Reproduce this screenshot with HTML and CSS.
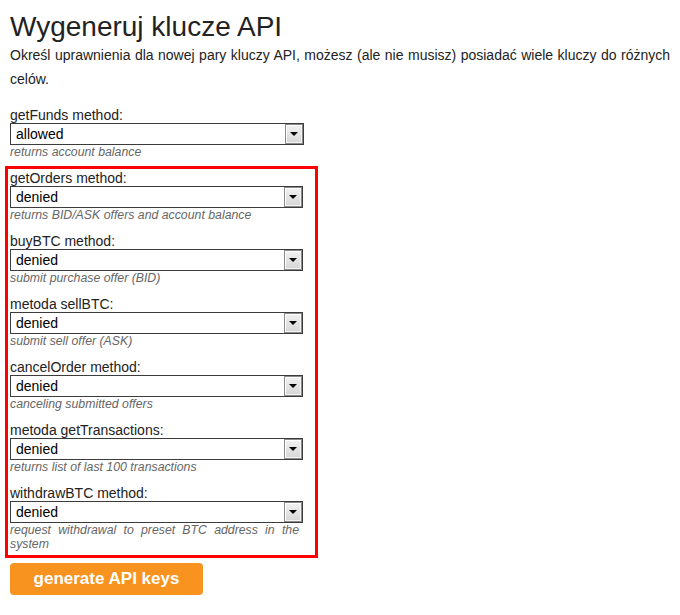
FILE: index.html
```html
<!DOCTYPE html>
<html lang="pl">
<head>
<meta charset="utf-8">
<title>Wygeneruj klucze API</title>
<link rel="stylesheet" href="styles.css">
</head>
<body>
<h1 class="title">Wygeneruj klucze API</h1>
<p class="intro">Określ uprawnienia dla nowej pary kluczy API, możesz (ale nie musisz) posiadać wiele kluczy do różnych celów.</p>
<form class="form">
  <div class="field field-first">
    <label class="label">getFunds method:</label>
    <div class="select"><select class="select-input"><option>allowed</option><option>denied</option></select><span class="arrow"></span></div>
    <div class="desc">returns account balance</div>
  </div>
  <div class="highlight">
    <div class="field">
      <label class="label">getOrders method:</label>
      <div class="select"><select class="select-input"><option>denied</option><option>allowed</option></select><span class="arrow"></span></div>
      <div class="desc">returns BID/ASK offers and account balance</div>
    </div>
    <div class="field">
      <label class="label">buyBTC method:</label>
      <div class="select"><select class="select-input"><option>denied</option><option>allowed</option></select><span class="arrow"></span></div>
      <div class="desc">submit purchase offer (BID)</div>
    </div>
    <div class="field">
      <label class="label">metoda sellBTC:</label>
      <div class="select"><select class="select-input"><option>denied</option><option>allowed</option></select><span class="arrow"></span></div>
      <div class="desc">submit sell offer (ASK)</div>
    </div>
    <div class="field">
      <label class="label">cancelOrder method:</label>
      <div class="select"><select class="select-input"><option>denied</option><option>allowed</option></select><span class="arrow"></span></div>
      <div class="desc">canceling submitted offers</div>
    </div>
    <div class="field">
      <label class="label">metoda getTransactions:</label>
      <div class="select"><select class="select-input"><option>denied</option><option>allowed</option></select><span class="arrow"></span></div>
      <div class="desc">returns list of last 100 transactions</div>
    </div>
    <div class="field field-last">
      <label class="label">withdrawBTC method:</label>
      <div class="select"><select class="select-input"><option>denied</option><option>allowed</option></select><span class="arrow"></span></div>
      <div class="desc">request withdrawal to preset BTC address in the system</div>
    </div>
  </div>
  <button type="button" class="btn">generate API keys</button>
</form>
</body>
</html>
```
FILE: styles.css
```css
html, body {
  margin: 0;
  background: #ffffff;
}
body {
  padding: 11px 10px 10px 10px;
  font-family: "Liberation Sans", Arial, sans-serif;
  color: #222222;
}
.title {
  margin: 0;
  font-size: 28px;
  line-height: 32px;
  font-weight: normal;
  color: #222222;
}
.intro {
  margin: 0 0 16px 0;
  font-size: 14px;
  line-height: 24px;
  text-align: justify;
  color: #222222;
}
.form {
  width: 294px;
}
.field {
  margin-bottom: 11px;
}
.field-first {
  margin-bottom: 7px;
}
.field-last {
  margin-bottom: 0;
}
.label {
  display: block;
  font-size: 14px;
  line-height: 16px;
  color: #222222;
}
.select {
  position: relative;
  height: 22px;
}
.select-input {
  appearance: none;
  -webkit-appearance: none;
  display: block;
  box-sizing: border-box;
  width: 100%;
  height: 22px;
  margin: 0;
  padding: 0 22px 0 5px;
  border: 1px solid #3c3c3c;
  border-radius: 0;
  background: #ffffff;
  font-family: "Liberation Sans", Arial, sans-serif;
  font-size: 14px;
  color: #000000;
  outline: none;
}
.arrow {
  position: absolute;
  top: 1px;
  right: 1px;
  width: 18px;
  height: 20px;
  box-sizing: border-box;
  border: 1px solid #8a8a8a;
  box-shadow: inset 1px 1px 0 #ffffff, inset -1px -1px 0 #f4f4f4;
  background: linear-gradient(#f2f2f2, #d6d6d6);
  pointer-events: none;
}
.arrow::after {
  content: "";
  position: absolute;
  left: 4px;
  top: 7px;
  width: 0;
  height: 0;
  border-left: 4px solid transparent;
  border-right: 4px solid transparent;
  border-top: 4px solid #000000;
}
.desc {
  padding-right: 4px;
  font-size: 12.3px;
  line-height: 14px;
  font-style: italic;
  color: #666666;
  text-align: justify;
}
.highlight {
  margin: 0 -14px 0 -5px;
  padding: 1px 12px 4px 2px;
  border: 3px solid #ff0000;
}
.btn {
  display: block;
  margin-top: 5px;
  width: 193px;
  height: 32px;
  padding: 0;
  border: none;
  border-radius: 4px;
  background: #f7931e;
  color: #ffffff;
  font-family: "Liberation Sans", Arial, sans-serif;
  font-size: 17px;
  font-weight: bold;
  cursor: pointer;
}
```
